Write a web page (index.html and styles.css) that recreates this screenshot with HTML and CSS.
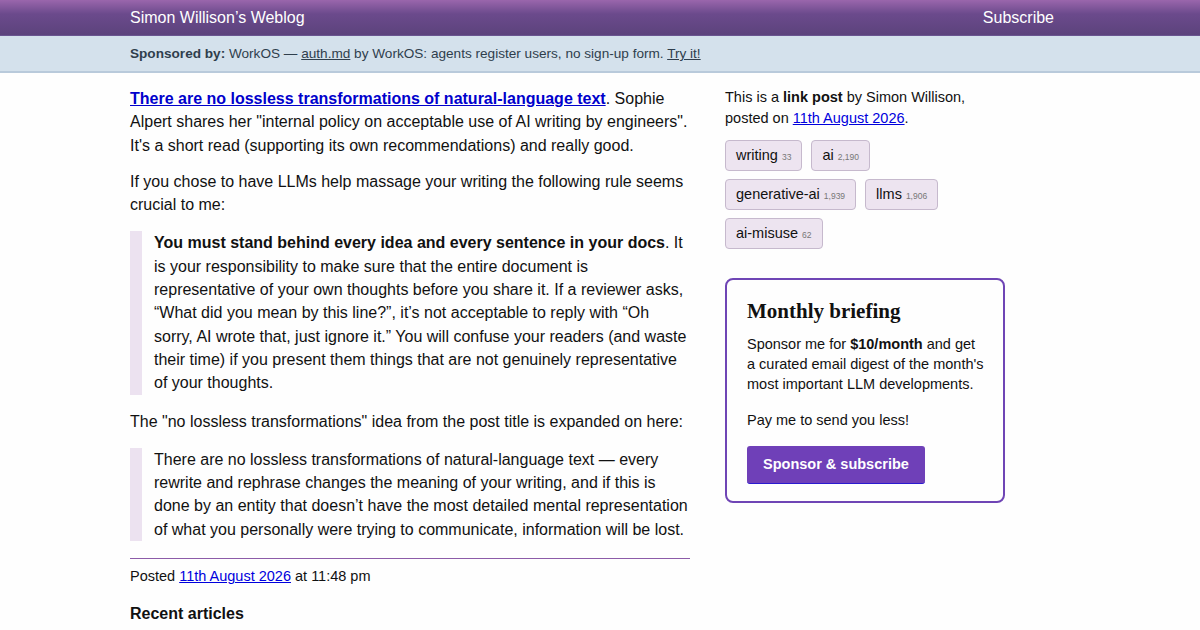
FILE: index.html
```html
<!DOCTYPE html>
<html lang="en">
<head>
    <meta charset="UTF-8">
    <meta name="viewport" content="width=device-width, initial-scale=1.0">
    <title>There are no lossless transformations of natural-language text</title>
    <link rel="stylesheet" href="styles.css">
</head>
<body>
    <header class="topbar">
        <div class="wrap topbar-inner">
            <a class="site-title" href="#">Simon Willison’s Weblog</a>
            <a class="subscribe-link" href="#">Subscribe</a>
        </div>
    </header>
    <div class="sponsor-bar">
        <div class="wrap">
            <strong>Sponsored by:</strong> WorkOS — <a href="#">auth.md</a> by WorkOS: agents register users, no sign-up form. <a href="#">Try it!</a>
        </div>
    </div>

    <div class="wrap page">
        <main class="primary">
            <div class="entry">
                <p><a class="entry-title" href="#">There are no lossless transformations of natural-language text</a>. Sophie Alpert shares her "internal policy on acceptable use of AI writing by engineers". It's a short read (supporting its own recommendations) and really good.</p>
                <p>If you chose to have LLMs help massage your writing the following rule seems crucial to me:</p>
                <blockquote>
                    <p><strong>You must stand behind every idea and every sentence in your docs</strong>. It is your responsibility to make sure that the entire document is representative of your own thoughts before you share it. If a reviewer asks, “What did you mean by this line?”, it’s not acceptable to reply with “Oh sorry, AI wrote that, just ignore it.” You will confuse your readers (and waste their time) if you present them things that are not genuinely representative of your thoughts.</p>
                </blockquote>
                <p>The "no lossless transformations" idea from the post title is expanded on here:</p>
                <blockquote>
                    <p>There are no lossless transformations of natural-language text — every rewrite and rephrase changes the meaning of your writing, and if this is done by an entity that doesn’t have the most detailed mental representation of what you personally were trying to communicate, information will be lost.</p>
                </blockquote>
            </div>
            <div class="entry-footer">
                Posted <a href="#">11th August 2026</a> at 11:48 pm
            </div>
            <h3 class="recent">Recent articles</h3>
        </main>

        <aside class="secondary">
            <p class="meta">This is a <strong>link post</strong> by Simon Willison, posted on <a href="#">11th August 2026</a>.</p>
            <div class="tags">
                <a class="tag" href="#">writing <span>33</span></a>
                <a class="tag" href="#">ai <span>2,190</span></a>
                <a class="tag" href="#">generative-ai <span>1,939</span></a>
                <a class="tag" href="#">llms <span>1,906</span></a>
                <a class="tag" href="#">ai-misuse <span>62</span></a>
            </div>

            <div class="briefing">
                <h2>Monthly briefing</h2>
                <p>Sponsor me for <strong>$10/month</strong> and get a curated email digest of the month's most important LLM developments.</p>
                <p>Pay me to send you less!</p>
                <a class="sponsor-btn" href="#">Sponsor &amp; subscribe</a>
            </div>
        </aside>
    </div>
</body>
</html>
```

FILE: styles.css
```css
body {
    margin: 0;
    padding: 0;
    font-family: "Liberation Sans", Arial, sans-serif;
    background-color: #fefefe;
    color: #111;
}

.wrap {
    width: 940px;
    margin: 0 auto;
    box-sizing: border-box;
}

a {
    color: #0000dd;
}

/* top navigation bar */
.topbar {
    background: linear-gradient(to bottom, #9a66ac 0%, #6b4a8c 40%, #5c437c 100%);
    height: 35px;
    border-bottom: 1px solid #6a5590;
}

.topbar-inner {
    display: flex;
    justify-content: space-between;
    align-items: center;
    height: 35px;
    padding-right: 16px;
}

.topbar a {
    color: #fff;
    text-decoration: none;
    font-size: 16px;
}

.sponsor-bar {
    background-color: #d4e1ec;
    border-bottom: 2px solid #b9cadb;
    font-size: 13.6px;
    color: #2f3e4c;
    padding: 10px 0 10px 0;
    line-height: 15px;
}

.sponsor-bar a {
    color: #2f3e4c;
}

/* two column layout */
.page {
    display: flex;
    gap: 35px;
    padding-top: 14px;
}

.primary {
    width: 560px;
}

.secondary {
    width: 280px;
}

.entry p {
    font-size: 16px;
    line-height: 23.3px;
    margin: 0 0 13px 0;
}

.entry-title {
    font-weight: bold;
    color: #0000cc;
}

blockquote {
    margin: 15px 0 15px 0;
    border-left: 12px solid #ece2f0;
    padding: 0 0 0 12px;
}

.entry blockquote p {
    margin: 0;
}

.entry-footer {
    border-top: 1px solid #8c5ba8;
    margin-top: 17px;
    padding-top: 7px;
    font-size: 14.5px;
    line-height: 20px;
}

.recent {
    font-size: 16px;
    margin: 19px 0 0 0;
}

/* sidebar */
.meta {
    font-size: 14.5px;
    line-height: 20.5px;
    margin: 0 0 12px 0;
}

.tags {
    display: flex;
    flex-wrap: wrap;
    gap: 8px 9px;
    margin-bottom: 29px;
}

.tag {
    display: inline-flex;
    align-items: baseline;
    height: 29px;
    background-color: #ede4f0;
    border: 1px solid #c6b9cd;
    border-radius: 4px;
    color: #111;
    text-decoration: none;
    font-size: 14.5px;
    line-height: 29px;
    padding: 0 10px;
}

.tag span {
    font-size: 8.5px;
    line-height: 1;
    color: #777;
    margin-left: 4px;
}

.briefing {
    border: 2px solid #6f45b5;
    border-radius: 8px;
    padding: 19px 17px 17px 20px;
}

.briefing h2 {
    font-family: "Liberation Serif", "Times New Roman", serif;
    font-size: 21px;
    margin: 0 0 10px 0;
}

.briefing p {
    font-size: 14.5px;
    line-height: 20px;
    margin: 0 0 16px 0;
}

.sponsor-btn {
    display: inline-block;
    background-color: #6f40b8;
    color: #fff;
    font-weight: bold;
    font-size: 14.5px;
    text-decoration: none;
    line-height: 17px;
    padding: 10px 16px 10px 16px;
    border-radius: 3px;
    border-bottom: 1px solid #2a1ad0;
}
```
